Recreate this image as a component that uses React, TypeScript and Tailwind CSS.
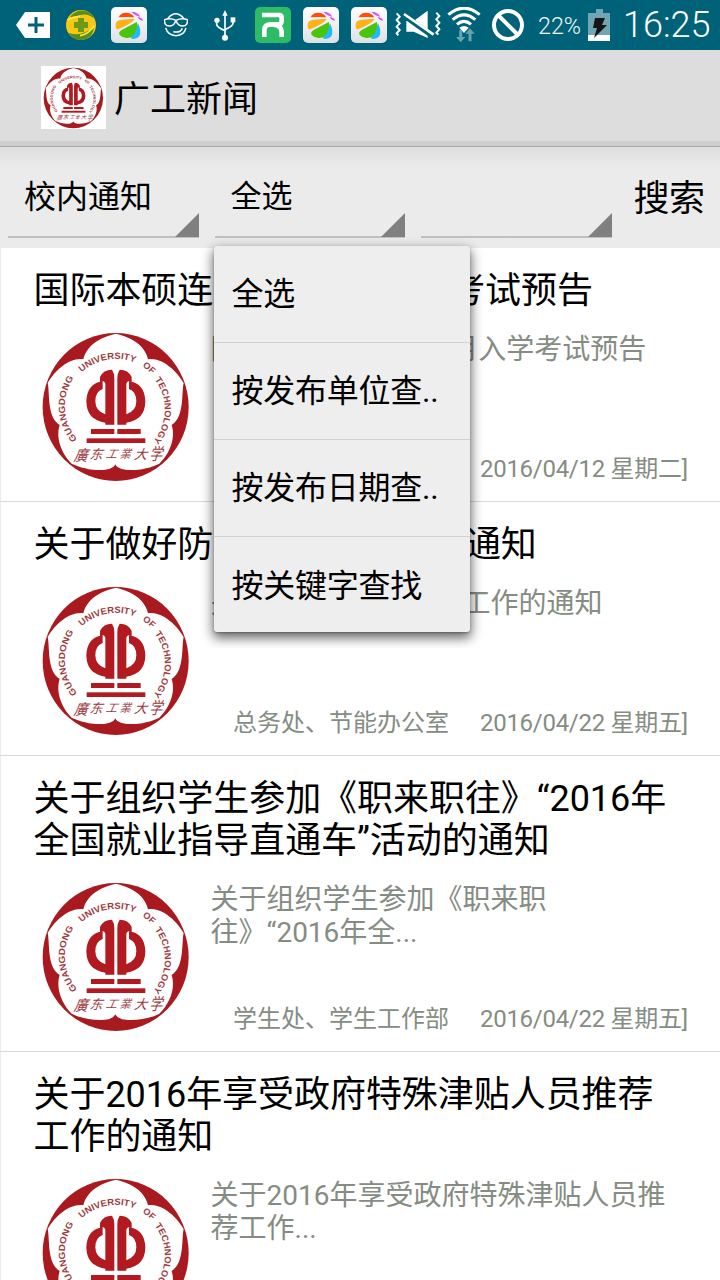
import React from "react";

const PETALS =
  "M258 42 C228 48 172 68 160 119 C122 112 76 150 53 190 C60 220 50 292 89 316 C76 356 96 404 125 432 C165 452 244 462 256 434 C268 462 350 452 388 432 C418 404 438 356 425 316 C464 292 454 220 461 190 C438 150 392 112 354 119 C344 68 286 48 258 42 Z";

function Seal({ className }: { className: string }) {
  return (
    <svg className={className} viewBox="33 34 450 456" preserveAspectRatio="none">
      <defs>
        <path id="seal-left" d="M142 358 A149 149 0 0 1 136 168" />
        <path id="seal-top" d="M155 158 A150 150 0 0 1 366 164" />
        <path id="seal-right" d="M374 180 A146 146 0 0 1 368 366" />
      </defs>
      <ellipse cx="257" cy="262" rx="219" ry="222" fill="#a81a1f" />
      <path d={PETALS} fill="#fff" />
      <g fill="#b01a20">
        {[false, true].map((flip) => (
          <g key={String(flip)} transform={flip ? "matrix(-1 0 0 1 515 0)" : undefined}>
            <path d="M246 150 Q253 160 253 176 V315 H226 V309 Q170 302 169 245 Q171 191 218 185 V208 Q196 215 196 245 Q196 274 226 284 V192 Q222 180 210 188 V172 Q220 150 246 150 Z" />
          </g>
        ))}
        <rect x="183" y="328" width="70" height="15" />
        <rect x="262" y="328" width="70" height="15" />
        <rect x="170" y="356" width="176" height="14" />
      </g>
      <g fill="#a03a40" className="font-['Liberation_Sans',sans-serif] font-bold" fontSize="27">
        <text>
          <textPath href="#seal-left" textLength="198" lengthAdjust="spacingAndGlyphs">GUANGDONG</textPath>
        </text>
        <text>
          <textPath href="#seal-top" textLength="172" lengthAdjust="spacingAndGlyphs">UNIVERSITY</textPath>
        </text>
        <text>
          <textPath href="#seal-top" startOffset="196" textLength="38" lengthAdjust="spacingAndGlyphs">OF</textPath>
        </text>
        <text>
          <textPath href="#seal-right" textLength="200" lengthAdjust="spacingAndGlyphs">TECHNOLOGY</textPath>
        </text>
      </g>
      <g fill="#98383c" fontSize="46" className="font-['Noto_Sans_CJK_TC',sans-serif]">
        <text transform="translate(130 424) skewX(-20) scale(.9,1)">廣</text>
        <text transform="translate(178 417) skewX(-20) scale(.85)">东</text>
        <text transform="translate(226 416) skewX(-24) scale(.75)">工</text>
        <text transform="translate(268 415) skewX(-20) scale(.75)">業</text>
        <text transform="translate(311 418) skewX(-20) scale(.85)">大</text>
        <text transform="translate(357 422) skewX(-16) scale(.85,1.1)">学</text>
      </g>
    </svg>
  );
}

function Pinwheel() {
  return (
    <svg className="h-9 w-9 shrink-0" viewBox="0 0 108 108">
      <defs>
        <linearGradient id="tile" x1="0" y1="0" x2="0" y2="1">
          <stop offset="0" stopColor="#fff" />
          <stop offset="1" stopColor="#dde0e5" />
        </linearGradient>
      </defs>
      <rect width="108" height="108" rx="15" fill="url(#tile)" />
      <path d="M23 31 Q28 16 48 17 Q64 19 70 31 Q45 29 23 31Z" fill="#ff4a10" />
      <path d="M15 63 Q10 43 26 39 Q45 36 72 36 Q57 53 23 66 Q17 68 15 63Z" fill="#ffb01c" />
      <path d="M27 85 Q20 77 31 70 L77 45 Q83 59 80 76 Q72 94 46 93 Q33 92 27 85Z" fill="#49c60b" />
      <path d="M81 49 Q90 66 87 83 Q83 94 66 96 Q59 96 62 90 Q77 73 81 49Z" fill="#24b7fa" />
      <path d="M61 14 Q79 14 88 29 Q75 28 61 14Z M79 31 Q93 29 96 42 Q87 40 79 31Z" fill="#d64cf0" />
    </svg>
  );
}

function StatusBar() {
  return (
    <header className="flex h-[50px] shrink-0 items-center bg-[#006278] pl-4">
      <svg className="h-[26px] w-[34px]" viewBox="0 0 34 26">
        <path d="M0 13 L9 0 H34 V26 H9 Z" fill="#fff" />
        <path d="M12 13 H28 M20 5 V21" stroke="#006278" strokeWidth="3" />
      </svg>
      <svg className="ml-4 h-[30px] w-[30px]" viewBox="0 0 90 90">
        <circle cx="45" cy="45" r="45" fill="#f8c714" />
        <path d="M16 16 C38 -8 74 0 84 25 Q64 9 44 15 Q28 19 12 22Z M8 68 Q43 83 84 51 Q80 88 44 90 Q20 89 8 68Z" fill="#578e20" />
        <path d="M4 30 Q20 21 42 19 M42 77 Q68 72 85 47" fill="none" stroke="#ffe83e" strokeWidth="5" />
        <path d="M36 24 H54 V36 H66 V54 H54 V66 H36 V54 H24 V36 H36Z" fill="#6d9a16" />
      </svg>
      <div className="ml-[15px]"><Pinwheel /></div>
      <svg className="ml-[17px] h-6 w-6" viewBox="0 0 72 72" fill="none" stroke="#fff" strokeWidth="4.5">
        <path d="M11 17 Q35 -12 60 17 M5 45 Q12 67 36 68 Q60 67 66 45 M28 56 Q48 61 55 46" />
        <path d="M2 20 Q18 14 36 22 Q54 14 70 20 Q72 39 56 39 Q43 39 37 26 L34 26 Q29 39 16 39 Q0 39 2 20Z" />
      </svg>
      <svg className="ml-[26px] h-[31px] w-[22px]" viewBox="0 0 66 93" fill="#fff">
        <path d="M33 0 L41 17 H25Z" />
        <path d="M33 12 V80 M8 30 V43 Q9 52 33 62 M57 30 V40 Q57 49 33 59" fill="none" stroke="#fff" strokeWidth="5" />
        <circle cx="9" cy="31" r="8" /><path d="M50 22 H64 V37 H50Z" /><circle cx="33" cy="83" r="9" />
      </svg>
      <svg className="ml-[19px] h-9 w-9 shrink-0" viewBox="0 0 108 108">
        <rect width="108" height="108" rx="15" fill="#2dbc65" />
        <path d="M21 24 H72 Q80 24 80 32 V42 Q80 52 70 52 H48 Q28 52 28 70 V90 M56 53 Q80 56 80 75 V90" fill="none" stroke="#fff" strokeWidth="14" />
      </svg>
      <div className="ml-3 flex gap-3"><Pinwheel /><Pinwheel /></div>
      <svg className="ml-2 h-[30px] w-[46px] shrink-0" viewBox="0 0 138 90" fill="none" stroke="#fff">
        <path d="M5 10 L14 20 L5 30 L14 40 L5 50 L14 60 L5 70 L10 76 M124 8 L133 18 L124 28 L133 38 L124 48 L133 58 L124 68 L130 74" strokeWidth="6" />
        <path d="M34 33 H56 L98 2 V84 L56 65 H34Z" fill="#fff" stroke="none" />
        <path d="M25 15 L110 76" stroke="#006278" strokeWidth="16" />
        <path d="M27 12 L116 74" strokeWidth="8" />
      </svg>
      <svg className="ml-[6px] h-[36px] w-[34px] shrink-0" viewBox="0 0 102 108" fill="none" stroke="#fff" strokeWidth="9">
        <path d="M4 23 Q51 -16 98 23 M17 38 Q51 9 85 38 M30 52 Q51 34 72 52" />
        <path d="M37 62 Q51 52 65 62 L51 78Z" fill="#fff" stroke="none" />
        <path d="M41 69 V93 M69 103 V78" stroke="#68a3ae" strokeWidth="9" />
        <path d="M27 90 H55 L41 106Z M55 80 H83 L69 64Z" fill="#68a3ae" stroke="none" />
      </svg>
      <svg className="ml-[11px] h-8 w-8 shrink-0" viewBox="0 0 32 32" fill="none" stroke="#fff" strokeWidth="4">
        <circle cx="16" cy="16" r="14" /><path d="M6 6 L26 26" />
      </svg>
      <span className="ml-[14px] w-[43px] whitespace-nowrap pt-0.5 font-['Roboto',sans-serif] text-[24px] leading-none text-[#f2f8f9]">
        <span className="inline-block origin-left scale-x-[.97] font-light">22%</span>
      </span>
      <svg className="ml-[7px] h-8 w-[22px] shrink-0" viewBox="0 0 22 32">
        <path d="M8 0 H15 V4 H22 V32 H0 V4 H8Z" fill="#70a5b1" />
        <path d="M0 26 H22 V32 H0Z" fill="#fff" />
        <path d="M7 9 H17 L14 16 H19 L6 29 L9 19 H5Z" fill="#151515" />
      </svg>
      <span className="ml-[13px] whitespace-nowrap font-['Roboto',sans-serif] text-[36px] font-light leading-none text-white">16:25</span>
    </header>
  );
}

function Spinner({ label, size = "text-[32px]" }: { label: string; size?: string }) {
  return (
    <div className="flex h-[91px] w-[190.5px] items-center border-b-2 border-[#c0c0c0] pl-4 pt-[11px]">
      <span className={`flex-1 whitespace-nowrap leading-10 ${size}`}>{label}</span>
      <svg className="-mb-px h-6 w-6 self-end" viewBox="0 0 24 24">
        <path d="M24 0 V24 H0Z" fill="#808080" />
      </svg>
    </div>
  );
}

interface NewsItem {
  title: string;
  desc: string;
  dept: string;
  date: string;
}

const NEWS: NewsItem[] = [
  { title: "国际本硕连读项目5月入学考试预告", desc: "国际本硕连读项目5月入学考试预告", dept: "教务处", date: "2016/04/12 星期二]" },
  { title: "关于做好防汛防台风工作的通知", desc: "关于做好防汛防台风工作的通知", dept: "总务处、节能办公室", date: "2016/04/22 星期五]" },
  { title: "关于组织学生参加《职来职往》“2016年\n全国就业指导直通车”活动的通知", desc: "关于组织学生参加《职来职\n往》“2016年全...", dept: "学生处、学生工作部", date: "2016/04/22 星期五]" },
  { title: "关于2016年享受政府特殊津贴人员推荐\n工作的通知", desc: "关于2016年享受政府特殊津贴人员推\n荐工作...", dept: "人事处", date: "2016/04/22 星期五]" },
];

function NewsRow({ item }: { item: NewsItem }) {
  return (
    <li className="shrink-0 border-b border-l border-b-[#d9d9d9] border-l-[#ececec] pl-[32.5px] pt-[22px]">
      <h2 className="whitespace-pre text-[36px] font-normal leading-[42px] tracking-[-0.05px]">{item.title}</h2>
      <div className="mt-[19px] flex h-[170px]">
        <Seal className="ml-[7px] h-[152px] w-[150px] shrink-0" />
        <div className="ml-5 flex flex-1 flex-col pt-0.5 text-[#858c83]">
          <p className="h-[120px] whitespace-pre text-[28px] leading-[33px]">{item.desc}</p>
          <div className="flex whitespace-nowrap pl-[22.5px] text-[24px] leading-[32px]">
            <span className="w-[247px]">{item.dept}</span>
            <span className="tracking-[-0.28px]">{item.date}</span>
          </div>
        </div>
      </div>
    </li>
  );
}

const OPTIONS = ["全选", "按发布单位查..", "按发布日期查..", "按关键字查找"];

export default function App() {
  return (
    <div className="relative flex h-[1280px] w-[720px] flex-col overflow-hidden bg-white font-['Roboto','Noto_Sans_CJK_SC',sans-serif] text-black">
      <StatusBar />
      <div className="flex h-[97px] shrink-0 items-center border-b border-[#a9a9a9] bg-linear-to-b from-[#dddddd] from-95% to-[#cecece] to-95% pl-[41px]">
        <div className="mb-px flex h-[63px] w-[65px] items-center justify-center bg-white">
          <Seal className="h-[62px] w-[61px]" />
        </div>
        <h1 className="ml-2 pt-[3px] text-[36px] leading-[42px]">广工新闻</h1>
      </div>
      <div className="flex h-[101px] shrink-0 bg-linear-to-b from-[#dedede] to-[#ebebeb] to-20% pl-2">
        <div className="flex gap-4">
          <Spinner label="校内通知" />
          <Spinner label="全选" size="text-[31px]" />
          <Spinner label="" />
        </div>
        <button className="ml-[22px] h-[101px] whitespace-nowrap pt-0.5 text-[36px] tracking-[-0.4px]">搜索</button>
      </div>
      <ul className="flex flex-1 flex-col overflow-hidden">
        {NEWS.map((item) => (
          <NewsRow key={item.title} item={item} />
        ))}
      </ul>
      <div className="absolute left-[190px] top-[236px] h-[412px] w-[304px] overflow-hidden px-6 pt-[10px]">
        <ul className="h-[386px] w-[256px] divide-y divide-[#d2d2d2] rounded-[3px] bg-[#eeeeee] shadow-[0_5px_12px_1px_rgba(0,0,0,0.6),0_1px_2px_rgba(0,0,0,0.25)]">
          {OPTIONS.map((o) => (
            <li key={o} className="flex h-[97px] items-center whitespace-nowrap pl-[17.5px] text-[32px] tracking-[-0.25px]">{o}</li>
          ))}
        </ul>
      </div>
    </div>
  );
}
